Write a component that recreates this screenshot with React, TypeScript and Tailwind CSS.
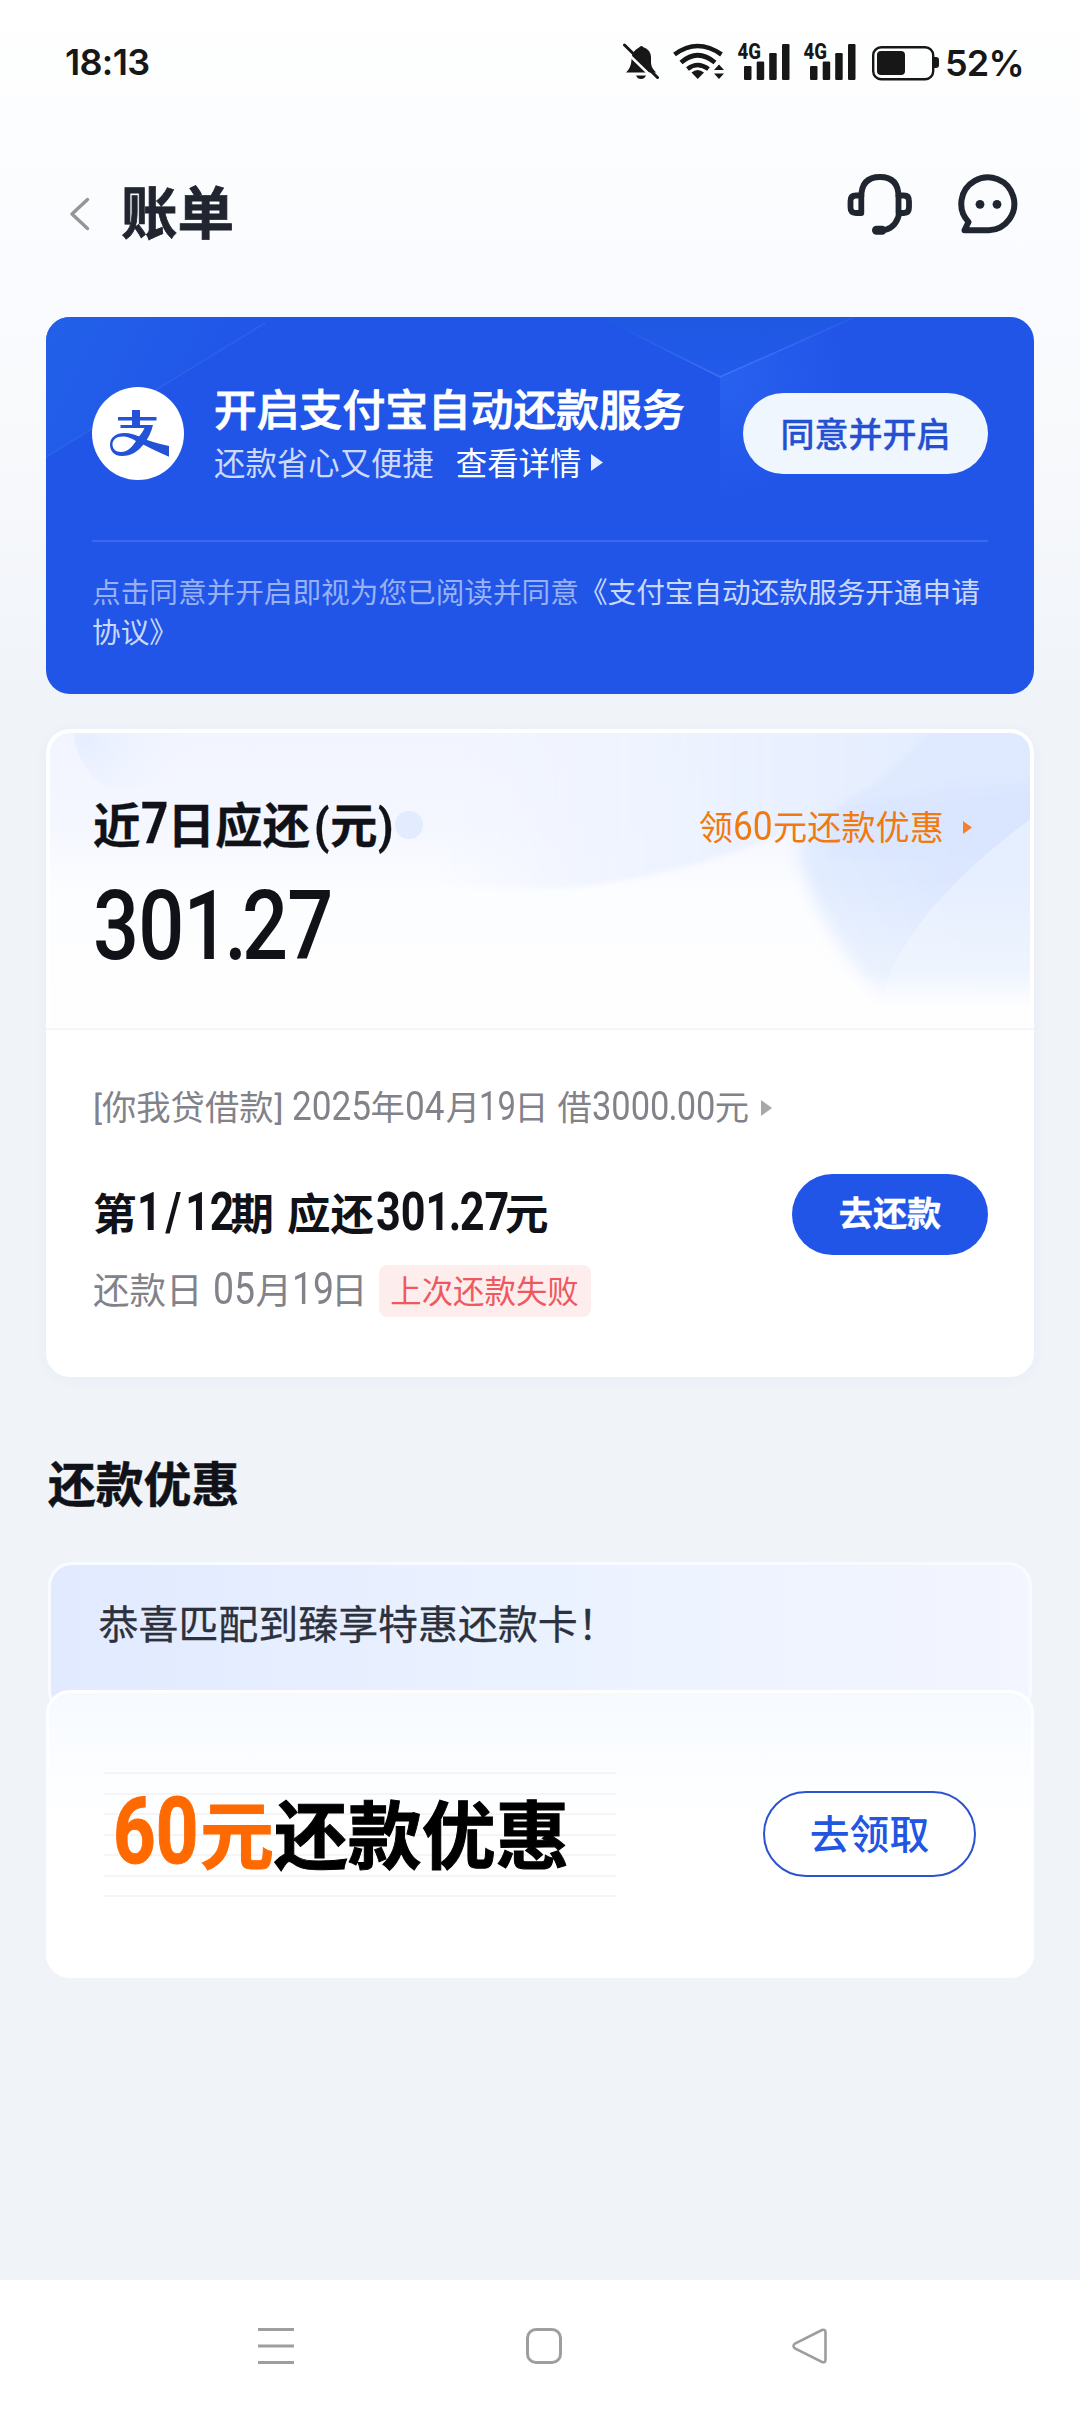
import type { ReactNode } from "react";

/* Condensed figures: the outer box keeps the advance, the inner one is narrowed. */
function Num({ box, fit, children }: { box: string; fit: string; children: ReactNode }) {
  return (
    <span className={`inline-block whitespace-nowrap ${box}`}>
      <span className={`inline-block origin-left font-[Roboto,sans-serif] leading-none ${fit}`}>{children}</span>
    </span>
  );
}

function Signal() {
  return (
    <svg width="60" height="56" viewBox="734 34 60 56" className="shrink-0 text-[#171717]" fill="currentColor">
      <text x="737.5" y="59" fontFamily="Roboto, sans-serif" fontWeight="800" fontSize="22" textLength="23.5" lengthAdjust="spacingAndGlyphs">4G</text>
      <rect x="744" y="66" width="7.5" height="14" rx="1.2" />
      <rect x="756.7" y="61.5" width="7.5" height="18.5" rx="1.2" />
      <rect x="769.2" y="53" width="7.5" height="27" rx="1.2" />
      <rect x="782" y="44" width="7.5" height="36" rx="1.2" />
    </svg>
  );
}

function StatusBar() {
  return (
    <div className="flex h-[124px] shrink-0 items-center pl-[65px] text-[#171717]">
      <span className="w-[90px] whitespace-nowrap font-[Inter,sans-serif] text-[36px] font-semibold leading-[40px] tracking-[-0.7px]">18:13</span>
      <div className="ml-[467px] flex items-center">
        <svg width="37" height="40" viewBox="622 42 37 40" className="shrink-0">
          <path fill="currentColor" d="M626 72.5 Q631 68 631.5 60 Q631.500 53 636 49.500 L639 47.500 Q641 44.500 643.500 47.200 Q650.500 49.500 651 57 V63 Q651.500 69 656.500 72.500 Z" />
          <path fill="currentColor" d="M636 75.500 H646 Q644.500 79 641 79 Q637.500 79 636 75.500 Z" />
          <path d="M624.500 45 L657.500 77.500" stroke="currentColor" strokeWidth="3" strokeLinecap="round" />
          <path d="M622 48 L655 80" stroke="#fefefe" strokeWidth="2.500" />
        </svg>
        <svg width="52" height="40" viewBox="672 42 52 40" className="ml-[13px] shrink-0" fill="none" stroke="currentColor" strokeWidth="4.6">
          <path d="M674.500 54.500 Q697.500 37.500 721.500 54.500" />
          <path d="M681 62.500 Q697.500 48 715 62.500" />
          <path d="M687.500 69 Q697.500 61 708.500 69" />
          <path d="M691.500 72.500 Q697.500 67.500 704 72.500 L697.700 79 Z" fill="currentColor" stroke="none" />
          <path d="M714 70 L719 64.500 L724 70 Z M714 73.500 L719 79 L724 73.500 Z" fill="currentColor" stroke="none" />
        </svg>
        <div className="ml-[10px] flex gap-[6px]">
          <Signal />
          <Signal />
        </div>
        <svg width="68" height="38" viewBox="872 44 68 38" className="ml-[12px] mt-[2px] shrink-0">
          <rect x="873.200" y="47.200" width="60" height="32" rx="8" fill="none" stroke="currentColor" strokeWidth="2.400" />
          <rect x="877" y="51" width="28" height="24" rx="4" fill="currentColor" />
          <path d="M934 57 h2 q3 0 3 3 v5 q0 3 -3 3 h-2 z" fill="currentColor" />
        </svg>
        <span className="ml-[5px] mt-px whitespace-nowrap font-[Inter,sans-serif] text-[36px] font-semibold leading-[40px] tracking-[-0.8px]">52%</span>
      </div>
    </div>
  );
}

function Header() {
  return (
    <header className="flex h-[193px] shrink-0 items-start pl-[68px] pr-[59px]">
      <svg width="24" height="38" viewBox="68 195 24 38" className="mt-[71px] shrink-0">
        <path d="M87.500 199.500 L72 214 L87.500 228.500" fill="none" stroke="#959595" strokeWidth="3.400" strokeLinecap="round" strokeLinejoin="round" />
      </svg>
      <h1 className="ml-[29px] mt-[45px] text-[56.500px] font-bold leading-[80px] text-[#20252f] [-webkit-text-stroke:0.8px_#20252f]">账单</h1>
      <div className="ml-auto mt-[47px] flex text-[#20262f]">
        <svg width="68" height="66" viewBox="845 171 68 66" fill="none" stroke="currentColor" strokeWidth="5.800" strokeLinejoin="round">
          <path d="M860.300 213 V195.500 H855 Q849.500 195.500 849.500 201 V207.500 Q849.500 213 855 213 Z" />
          <path d="M897.500 213 V195.500 H903 Q908 195.500 908 201 V207.500 Q908 213 903 213 Z" />
          <path d="M860.300 197 Q860.300 177 879 177 Q897.500 177 897.500 197" />
          <path d="M898.500 212 Q896 227 884 230" />
          <path d="M875.500 230.200 H881" strokeWidth="9" strokeLinecap="round" />
        </svg>
        <svg width="64" height="66" viewBox="956 171 64 66" className="ml-[43px]" fill="none" stroke="currentColor" strokeWidth="6" strokeLinejoin="round">
          <path d="M988 230.300 H963.500 L967.500 222 A26.500 26.500 0 1 1 988 230.300 Z" />
          <g fill="currentColor" stroke="none">
            <circle cx="979" cy="204.300" r="4.400" />
            <circle cx="996" cy="204.300" r="4.400" />
          </g>
        </svg>
      </div>
    </header>
  );
}

function AutoPayCard() {
  return (
    <section className="relative h-[377px] shrink-0 overflow-hidden rounded-[24px] bg-[#2155e8] px-[46px] text-white">
      <svg className="absolute inset-0" width="988" height="377" viewBox="46 317 988 377" fill="none">
        <defs>
          <linearGradient id="cornerGlow" x1="46" y1="340" x2="200" y2="420" gradientUnits="userSpaceOnUse">
            <stop offset="0" stopColor="#2260e8" />
            <stop offset="1" stopColor="#2260e8" stopOpacity="0.1" />
          </linearGradient>
          <radialGradient id="cubeGlow" cx="720" cy="375" r="125" gradientUnits="userSpaceOnUse">
            <stop offset="0" stopColor="#2f6bf5" stopOpacity="0.55" />
            <stop offset="1" stopColor="#2f6bf5" stopOpacity="0" />
          </radialGradient>
          <linearGradient id="topFace" x1="720" y1="317" x2="720" y2="376" gradientUnits="userSpaceOnUse">
            <stop offset="0" stopColor="#1f58e2" />
            <stop offset="1" stopColor="#225aea" />
          </linearGradient>
          <linearGradient id="edgeFade" x1="620" y1="0" x2="860" y2="0" gradientUnits="userSpaceOnUse">
            <stop offset="0" stopColor="#3f74f3" stopOpacity="0" />
            <stop offset="0.45" stopColor="#3f74f3" />
            <stop offset="1" stopColor="#3f74f3" stopOpacity="0.2" />
          </linearGradient>
        </defs>
        <path d="M46 317 H275 L46 457 Z" fill="url(#cornerGlow)" />
        <path d="M46 457 L265 323" stroke="#3a6bee" strokeOpacity="0.5" strokeWidth="1.500" />
        <path d="M600 317 L720 377 L855 317 Z" fill="url(#topFace)" />
        <path d="M720 377 L855 317 H1000 V500 H720 Z" fill="url(#cubeGlow)" />
        <path d="M620 327 L720 377 L855 317" stroke="url(#edgeFade)" strokeWidth="1.500" />
      </svg>
      <div className="relative flex h-[225px] items-start border-b-2 border-[#3c69ec]">
        <svg width="92" height="93" viewBox="0 0 92 93" className="mt-[70px] shrink-0">
          <ellipse cx="46" cy="46.500" rx="46" ry="46.500" fill="#fff" />
          <g fill="#2352d6">
            <path d="M40 23 H48 V30 H64.500 V33.500 H48 V38.500 H40 V33.500 H26 V30 H40 Z" />
            <path d="M28.500 38 H61 C59 46 56 52 51 58 C46 64.500 39 69 30 69 C21 69 18 63 18 57.500 C18 50.500 24 46 32.500 46 C38 46 42 47.500 47 49.500 C50 46 51.500 43 52.500 41 H28.500 Z M44 54 C39 51 35.500 49.500 31 49.500 C24 49.500 20.500 53 20.500 57.500 C20.500 61.500 23.500 65 29 65 C35 65 40 60.500 44 54 Z" fillRule="evenodd" />
            <path d="M46 49.200 C55 53.500 65 56.500 77 59 V69.800 C66 65 54 59 43.500 53.500 Z" />
          </g>
        </svg>
        <div className="ml-[30px] mt-[64px]">
          <h2 className="text-[42.800px] font-medium leading-[52px] [-webkit-text-stroke:0.8px_white]">开启支付宝自动还款服务</h2>
          <div className="flex items-center text-[31.400px] leading-[57px]">
            <span className="text-[#cddafb]">还款省心又便捷</span>
            <span className="ml-[22px]">查看详情</span>
            <svg width="12" height="17" viewBox="0 0 12 17" className="ml-[10px] mt-[2px]"><path d="M0 0 L12 8.500 L0 17 Z" fill="#e8efff" /></svg>
          </div>
        </div>
        <button className="ml-auto mt-[76px] flex h-[81px] w-[245px] items-center justify-center rounded-full bg-[#f0f6fe] pb-[2px] text-[34px] font-medium text-[#2450d2] [-webkit-text-stroke:0.3px_#2450d2]">同意并开启</button>
      </div>
      <p className="relative mt-[29px] w-[896px] text-[28.650px] leading-[40px] text-[#c9d8fb]">
        <span className="text-[#98b1f4]">点击同意并开启即视为您已阅读并同意</span>《支付宝自动还款服务开通申请
        <br />
        协议》
      </p>
    </section>
  );
}

function BillBackdrop() {
  return (
    <svg className="absolute left-0 top-0" width="982" height="294" viewBox="49 733 982 294" fill="none">
      <defs>
        <linearGradient id="billBase" x1="0" y1="733" x2="0" y2="1000" gradientUnits="userSpaceOnUse">
          <stop offset="0" stopColor="#f2f5ff" />
          <stop offset="0.350" stopColor="#f5f7ff" />
          <stop offset="0.600" stopColor="#fcfdff" />
          <stop offset="1" stopColor="#fefefe" />
        </linearGradient>
        <linearGradient id="billWave" x1="430" y1="0" x2="950" y2="0" gradientUnits="userSpaceOnUse">
          <stop offset="0" stopColor="#f1f5ff" stopOpacity="0" />
          <stop offset="0.300" stopColor="#f0f4ff" stopOpacity="0.900" />
          <stop offset="1" stopColor="#e3edff" />
        </linearGradient>
        <linearGradient id="billGlobe" x1="790" y1="880" x2="960" y2="800" gradientUnits="userSpaceOnUse">
          <stop offset="0" stopColor="#e3edff" />
          <stop offset="0.500" stopColor="#dee9ff" />
          <stop offset="1" stopColor="#dae5ff" />
        </linearGradient>
        <linearGradient id="billFade" x1="0" y1="880" x2="0" y2="1008" gradientUnits="userSpaceOnUse">
          <stop offset="0" stopColor="#fefefe" stopOpacity="0" />
          <stop offset="0.720" stopColor="#fefefe" stopOpacity="0.350" />
          <stop offset="1" stopColor="#fefefe" />
        </linearGradient>
        <radialGradient id="billOrb" cx="85" cy="740" r="105" gradientUnits="userSpaceOnUse">
          <stop offset="0" stopColor="#e6eeff" />
          <stop offset="1" stopColor="#f1f5ff" stopOpacity="0" />
        </radialGradient>
        <filter id="soft" x="-20%" y="-20%" width="140%" height="140%">
          <feGaussianBlur stdDeviation="8" />
        </filter>
        <filter id="softer" x="-20%" y="-20%" width="140%" height="140%">
          <feGaussianBlur stdDeviation="2.500" />
        </filter>
      </defs>
      <rect x="49" y="733" width="982" height="294" fill="url(#billBase)" />
      <path d="M72 733 Q82 788 125 791 Q190 785 200 733 Z" fill="url(#billOrb)" />
      <circle cx="408" cy="825" r="14" fill="#e3ebff" />
      <path d="M400 700 H1060 V830 H790 Q660 885 540 889 Q460 890 400 880 Z" fill="url(#billWave)" filter="url(#softer)" />
      <path d="M860 800 Q806 815 797 848 Q805 905 870 990 L890 1030 H1080 V780 Z" fill="url(#billGlobe)" filter="url(#soft)" />
      <path d="M928 733 H1031 V860 H830 Q822 830 840 806 Q885 780 928 733 Z" fill="#d9e4ff" fillOpacity="0.450" filter="url(#softer)" />
      <path d="M1031 818 C985 852 920 905 888 975 L880 1010 H1031 Z" fill="#eaf1ff" fillOpacity="0.750" />
      <rect x="49" y="880" width="982" height="147" fill="url(#billFade)" />
    </svg>
  );
}

function BillCard() {
  return (
    <section className="mt-[35px] flex h-[648px] shrink-0 flex-col overflow-hidden rounded-[24px] bg-white p-[4px] shadow-[0_2px_14px_rgba(60,80,160,0.04)]">
      <div className="relative h-[295px] shrink-0 overflow-hidden rounded-t-[20px]">
        <BillBackdrop />
        <div className="relative flex items-start pl-[43px] pr-[58px] pt-[55px] text-[#101218]">
          <div>
            <h2 className="whitespace-nowrap text-[47.500px] font-bold leading-[70px] [-webkit-text-stroke:0.3px_#101218]">
              近<Num box="w-[27px]" fit="text-[58px] scale-x-[0.820]">7</Num>日应还
              <Num box="w-[20px] pl-[4px]" fit="text-[49px] scale-x-[0.900]">(</Num>元
              <Num box="w-[20px]" fit="text-[49px] scale-x-[0.900]">)</Num>
            </h2>
            <div className="mt-[8px] h-[90px] font-[Roboto,sans-serif] text-[97px] leading-[120px] font-medium">
              <span className="inline-block origin-left scale-x-[0.835] tracking-[-1px]">301<span className="-mx-[5px]">.</span>27</span>
            </div>
          </div>
          <div className="ml-auto flex items-center whitespace-nowrap text-[34.200px] leading-[75px] text-[#f07a10]">
            领<Num box="w-[40px]" fit="text-[41px] scale-x-[0.860]">60</Num>元还款优惠
            <svg width="9" height="13" viewBox="0 0 9 13" className="ml-[19px] mt-[4px]"><path d="M0 0 L9 6.500 L0 13 Z" fill="#f5802a" /></svg>
          </div>
        </div>
      </div>
      <div className="-mx-[4px] flex flex-1 flex-col border-t-2 border-[#f5f6f8] px-[46px]">
        <div className="mt-[48px] flex h-[56px] items-center whitespace-nowrap pl-px text-[34.300px] text-[#82828a]">
          <Num box="w-[9px]" fit="text-[34px]">[</Num>你我贷借款
          <Num box="w-[18px] pl-[1px]" fit="text-[34px]">]</Num>
          <Num box="w-[79px]" fit="text-[40px] scale-x-[0.880]">2025</Num>年
          <Num box="w-[41px]" fit="text-[40px] scale-x-[0.880]">04</Num>月
          <Num box="w-[35px] -ml-px" fit="text-[40px] scale-x-[0.820]">19</Num>日
          <span className="ml-[9px]">借</span>
          <Num box="w-[123px]" fit="text-[40px] scale-x-[0.860]">3000<span className="-mx-[1px]">.</span>00</Num>元
          <svg width="11" height="16" viewBox="0 0 11 16" className="ml-[12px] mt-[3px]"><path d="M0 0 L11 8 L0 16 Z" fill="#a8a8ac" /></svg>
        </div>
        <div className="mt-[40px] flex items-start">
          <div>
            <div className="flex h-[76px] items-center whitespace-nowrap pl-px text-[43.500px] font-bold text-[#101218]">
              第<Num box="w-[94px]" fit="text-[54px] scale-x-[0.790]">1<span className="mx-[5px]">/</span>12</Num>期
              <span className="ml-[13px]">应还</span>
              <Num box="w-[131px] pl-[2px]" fit="text-[54px] scale-x-[0.800]">301<span className="-mx-[2px]">.</span>27</Num>元
            </div>
            <div className="mt-px flex h-[76px] items-center whitespace-nowrap pl-px text-[36.500px] text-[#82828a]">
              还款日
              <Num box="ml-[10px] w-[43px]" fit="text-[44px] scale-x-[0.850]">05</Num>月
              <Num box="w-[39px]" fit="text-[44px] scale-x-[0.850]">19</Num>日
              <span className="ml-[11px] mt-[3px] flex h-[52px] w-[212px] items-center justify-center rounded-[8px] bg-[#fdedec] pb-[2px] text-[31.400px] text-[#ef5860]">上次还款失败</span>
            </div>
          </div>
          <button className="ml-auto flex h-[81px] w-[196px] items-center justify-center rounded-full bg-[#2155e8] pb-[5px] text-[34.200px] font-bold text-white [-webkit-text-stroke:0.3px_white]">去还款</button>
        </div>
      </div>
    </section>
  );
}

function OfferCard() {
  return (
    <section className="shrink-0">
      <div className="mx-[2px] h-[152px] rounded-[24px] border-[3px] border-b-0 border-[#f8fbff] bg-linear-to-r from-[#e1eaff] via-[#ebf2ff] to-[#f3f5ff] pl-[47.500px] pt-[26px]">
        <p className="text-[39.950px] leading-[62px] text-[#2c313b] [-webkit-text-stroke:0.3px_#2c313b]">恭喜匹配到臻享特惠还款卡！</p>
      </div>
      <div className="relative -mt-[24px] flex h-[288px] items-start rounded-[24px] border-[3px] border-white bg-linear-to-b from-[#f6faff] via-[#fdfeff] via-35% to-white to-50% pl-[55px] pr-[55px]">
        <div className="mt-[79px] flex h-[125px] w-[512px] items-center whitespace-nowrap bg-[repeating-linear-gradient(to_bottom,#f5f5f7_0px,#f5f5f7_2px,transparent_2px,transparent_20.500px)] pb-[6px] pl-[9px] text-[73.900px] font-bold text-black [-webkit-text-stroke:1px_currentColor]">
          <span className="flex items-center text-[#ff6a00]">
            <Num box="w-[87px]" fit="text-[92px] scale-x-[0.810]">60</Num>元
          </span>
          还款优惠
        </div>
        <button className="ml-auto mt-[98px] flex h-[86px] w-[213px] items-center justify-center rounded-full border-2 border-[#2c53cf] bg-white pb-[5px] text-[39.800px] font-medium text-[#2155e2]">去领取</button>
      </div>
    </section>
  );
}

function NavBar() {
  return (
    <nav className="mt-auto flex h-[132px] shrink-0 items-start bg-white pl-[256px] pt-[46px] text-[#9e9e9e]">
      <svg width="40" height="40" viewBox="256 2326 40 40" stroke="currentColor" strokeWidth="3">
        <path d="M258 2329.500 H294 M258 2346 H294 M258 2362.500 H294" />
      </svg>
      <svg width="40" height="40" viewBox="524 2326 40 40" className="ml-[228px]" fill="none" stroke="currentColor" strokeWidth="3">
        <rect x="527.500" y="2329.500" width="33" height="33" rx="8.500" />
      </svg>
      <svg width="40" height="40" viewBox="790 2326 40 40" className="ml-[226px]" fill="none" stroke="currentColor" strokeWidth="2.600">
        <path d="M822 2330 L795 2343.500 Q792 2346 795 2348.500 L822 2362 Q825.500 2363 825.500 2359.500 V2332.500 Q825.500 2329 822 2330 Z" />
      </svg>
    </nav>
  );
}

export default function App() {
  return (
    <div className="flex h-[2412px] w-[1080px] flex-col bg-[#f0f4f9] bg-[linear-gradient(to_bottom,#ffffff_0px,#fcfdfe_130px,#f9fbff_280px,#f9fafc_400px,#f0f4f9_700px)] font-['Noto_Sans_CJK_SC',sans-serif]">
      <StatusBar />
      <Header />
      <main className="flex flex-col px-[46px]">
        <AutoPayCard />
        <BillCard />
        <h2 className="mt-[70px] h-[115px] shrink-0 pl-[2px] text-[47.800px] font-bold leading-[70px] text-[#101218] [-webkit-text-stroke:0.5px_#101218]">还款优惠</h2>
        <OfferCard />
      </main>
      <NavBar />
    </div>
  );
}
